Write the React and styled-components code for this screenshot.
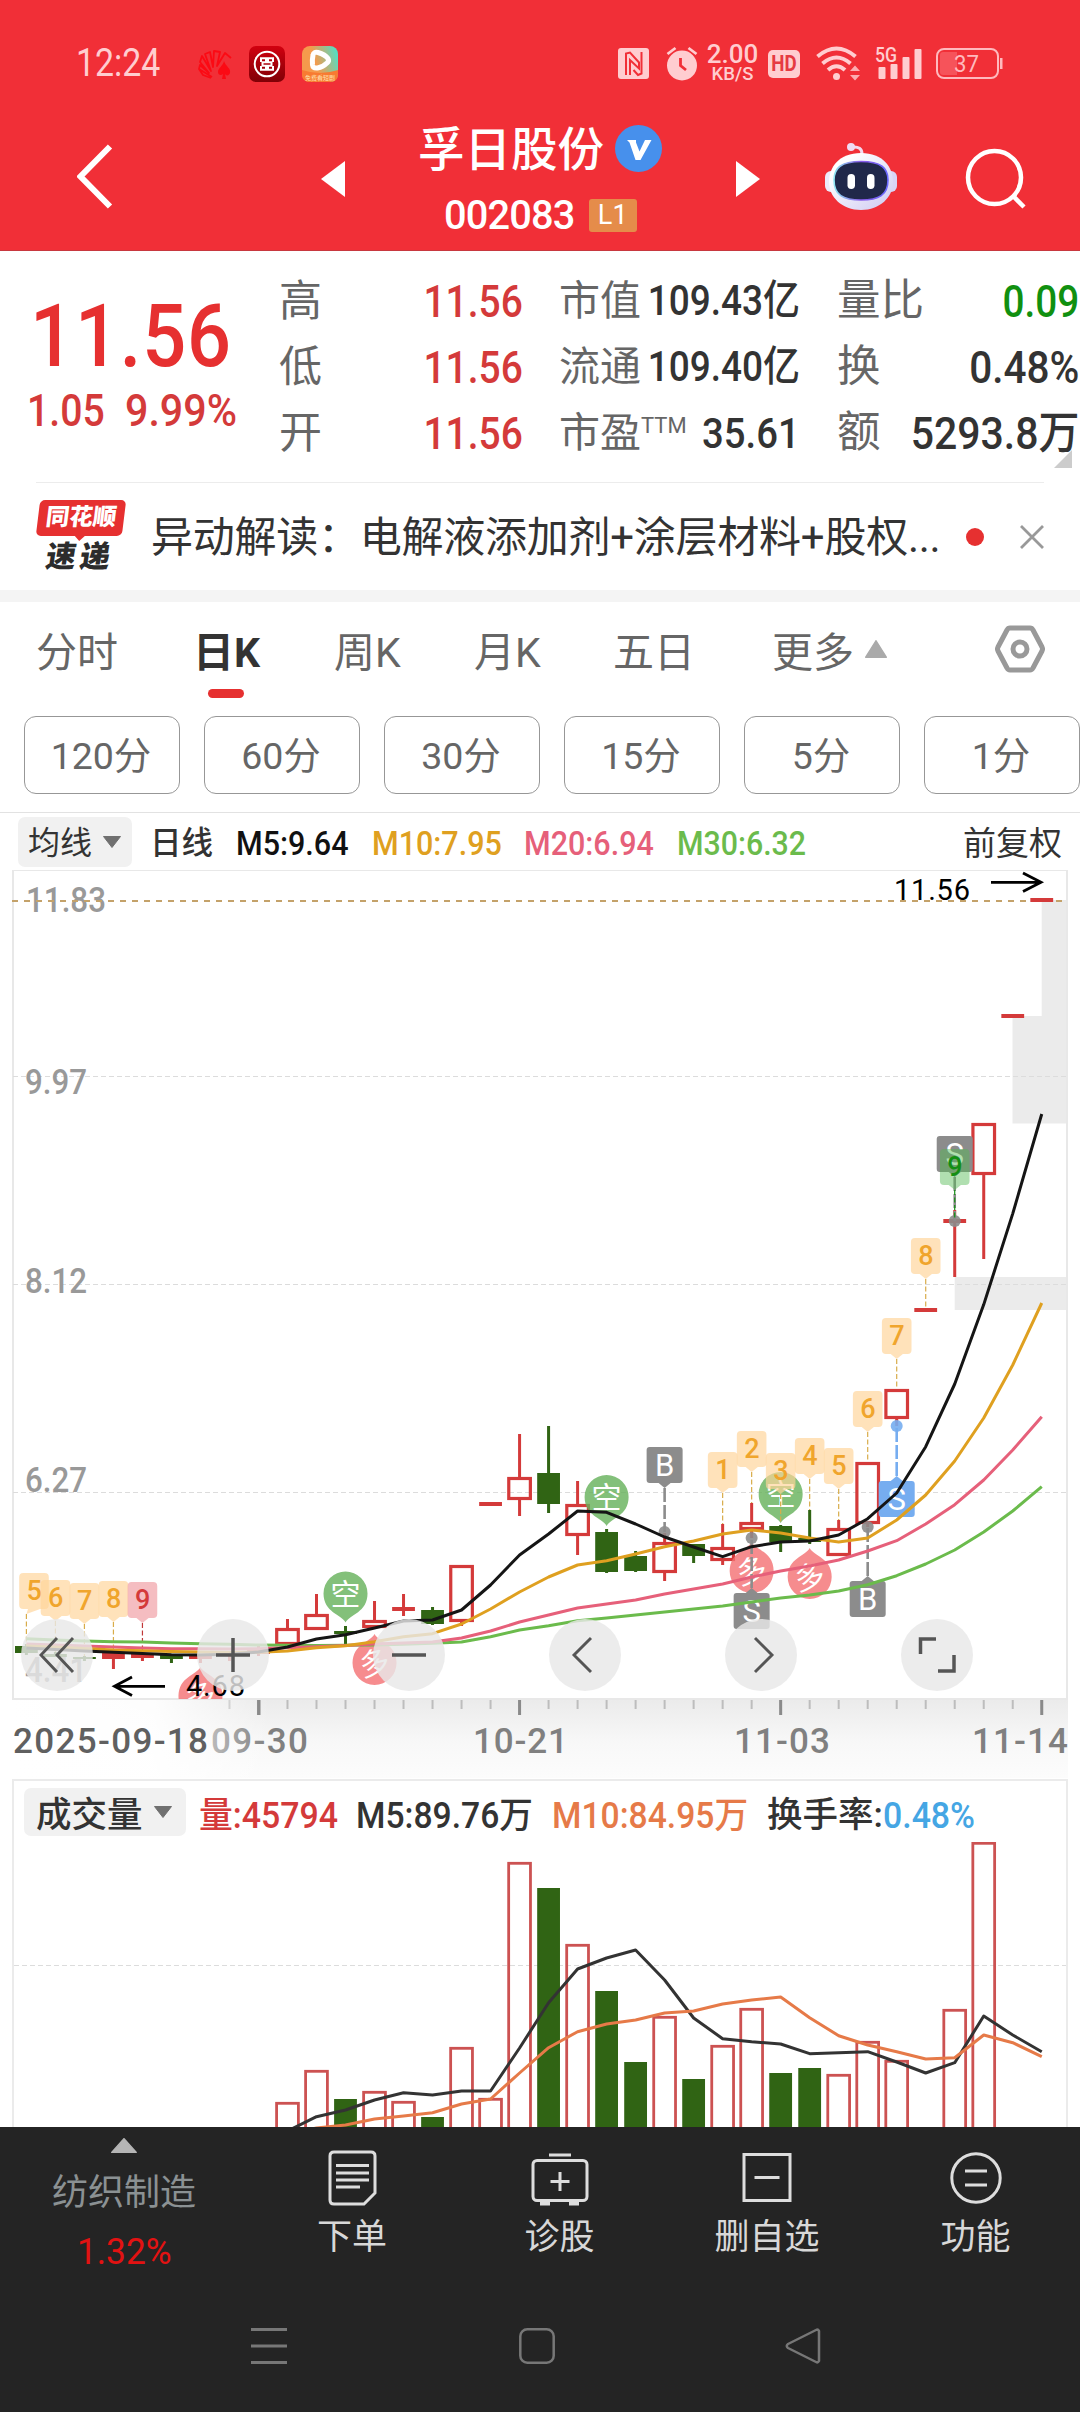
import React from "react";
import styled, { createGlobalStyle } from "styled-components";

const Global = createGlobalStyle`
  * { box-sizing: border-box; }
  body { margin: 0; background: #fff; font-family: Roboto, "Noto Sans CJK SC", sans-serif; color: #333; }
  svg { display: block; flex: none; }
`;

const RED = "#e63030";
const UP = "#d43a3a";
const DOWN = "#306414";

const Screen = styled.div`
  width: 1080px; height: 2412px; overflow: hidden; display: flex; flex-direction: column; background: #fff;
`;

const Num = styled.span`
  display: inline-block; white-space: nowrap;
  font-size: ${(p) => p.$size}px; line-height: 1; font-weight: ${(p) => p.$weight || 500};
  color: ${(p) => p.$color || "inherit"};
  letter-spacing: ${(p) => p.$ls || 0}px;
  transform: scaleX(${(p) => p.$sx || 0.92}); transform-origin: ${(p) => p.$from || "left"} center;
`;

/* ---------- header ---------- */
const Header = styled.header`
  height: 251px; background: #f12f37; border-bottom: 1px solid #c8383f; display: flex; flex-direction: column; color: #fff; flex: none;
`;
const StatusBar = styled.div`
  height: 110px; padding: 17px 77px 0 76px; display: flex; align-items: center; justify-content: space-between; color: #ffcdd0;
`;
const StatusLeft = styled.div` display: flex; align-items: center; `;
const Clock = styled.div` width: 121px; `;
const AppIcons = styled.div` display: flex; align-items: center; gap: 17px; `;
const StatusRight = styled.div` display: flex; align-items: center; `;
const Speed = styled.div`
  width: 53px; margin: 0 9px 0 8px; display: flex; flex-direction: column; align-items: center; line-height: 1; font-weight: 500;
`;
const SpeedValue = styled.span` font-size: 26px; line-height: 21px; `;
const SpeedUnit = styled.span` font-size: 18.5px; line-height: 18px; `;

const NavBar = styled.div`
  height: 140px; display: grid; grid-template-columns: 77px 244px 24px 391px 24px 65px 72px 68px 1fr; align-items: start;
`;
const NavCell = styled.div` grid-column: ${(p) => p.$col}; padding-top: ${(p) => p.$top}px; `;
const Title = styled.div`
  grid-column: 4; display: flex; flex-direction: column; align-items: center; padding-top: 12px;
`;
const NameRow = styled.div` display: flex; align-items: center; gap: 11px; height: 52px; padding-right: 1px; `;
const Name = styled.div` font-size: 46.5px; font-weight: 500; line-height: 52px; white-space: nowrap; padding-top: 3px; `;
const CodeRow = styled.div` display: flex; align-items: center; gap: 10px; height: 40px; margin-top: 21px; `;
const Level = styled.div`
  width: 48px; height: 33px; border-radius: 3px; background: #e58c4a; display: grid; place-items: center; font-size: 27px; line-height: 1; padding-top: 1px;
`;

/* ---------- quote ---------- */
const Quote = styled.section` height: 231px; display: flex; padding: 17px 0 0 0; flex: none; position: relative; `;
const PriceCol = styled.div` width: 279px; padding: 24px 0 0 27px; `;
const Price = styled.div` height: 88px; padding-left: 3px; `;
const Change = styled.div` display: flex; margin-top: 8px; `;
const ChangeCell = styled.div` width: 98px; `;
const Stats = styled.div` display: flex; flex-direction: column; flex: none; width: ${(p) => p.$w}px; margin-right: ${(p) => p.$gap || 0}px; `;
const Stat = styled.div` height: 66px; display: flex; align-items: center; white-space: nowrap; `;
const StatLabel = styled.span` flex: none; font-size: ${(p) => p.$size}px; line-height: 66px; color: #666; `;
const StatValue = styled.span` flex: 1; min-width: 0; display: flex; justify-content: flex-end; `;
const Sup = styled.sup` font-size: 22px; line-height: 1; vertical-align: 14px; `;
const Corner = styled.svg` position: absolute; left: 1054px; top: 199px; `;

const News = styled.section`
  height: 108px; margin: 0 36px; border-top: 1px solid #ececec; display: flex; align-items: center; flex: none;
`;
const Logo = styled.div` width: 115px; padding-left: 1px; display: flex; flex-direction: column; `;
const LogoTop = styled.div`
  width: 86px; height: 36px; background: ${RED}; border-radius: 5px; transform: skewX(-7deg); margin-left: 1px;
  color: #fff; font-size: 23.5px; font-weight: 900; line-height: 35px; text-align: center; position: relative; white-space: nowrap;
  &::after { content: ""; position: absolute; left: 38px; top: 35px; border: 6px solid transparent; border-top-color: ${RED}; border-bottom: 0; }
`;
const LogoBottom = styled.div`
  font-size: 30px; font-weight: 900; line-height: 34px; transform: skewX(-9deg); letter-spacing: 4px; padding-left: 9px; margin-top: 4px; color: #2c2c2c;
`;
const Headline = styled.div` flex: 1; font-size: 42px; line-height: 60px; white-space: nowrap; color: #333; letter-spacing: -0.25px; padding-top: 2px; `;
const Dot = styled.i` width: 18px; height: 18px; border-radius: 9px; background: ${RED}; margin-right: 36px; `;
const Band = styled.div` height: 12px; background: #f4f4f4; flex: none; `;

/* ---------- period tabs ---------- */
const Tabs = styled.nav`
  height: 114px; display: grid; grid-template-columns: 160px 138px 140px 139px 159px 223px 1fr; padding-left: 36px; flex: none;
`;
const Tab = styled.div`
  display: flex; align-items: center; gap: 11px; height: 94px; font-size: 41px; white-space: nowrap; text-indent: ${(p) => (p.$active ? -3 : 0)}px;
  font-weight: ${(p) => (p.$active ? 700 : 400)}; color: ${(p) => (p.$active ? "#333" : "#666")}; position: relative;
  ${(p) => p.$active && `&::after { content: ""; position: absolute; left: 12px; top: 87px; width: 36px; height: 9px; border-radius: 5px; background: ${RED}; }`}
`;
const Minutes = styled.div` height: 97px; padding-left: 24px; display: flex; gap: 24px; border-bottom: 1px solid #e2e2e2; flex: none; `;
const Minute = styled.div`
  flex: none; width: 156px; height: 78px; border: 1px solid #979797; border-radius: 12px; display: grid; place-items: center;
  font-size: 37.5px; color: #666; line-height: 1; padding: 3px 2px 0 0;
`;

/* ---------- indicator rows ---------- */
const Legend = styled.div`
  height: ${(p) => p.$h}px; display: grid; grid-template-columns: ${(p) => p.$cols}; align-items: center; padding-left: ${(p) => p.$pl}px; flex: none;
  > span { margin-top: ${(p) => p.$drop}px; }
`;
const Picker = styled.div`
  display: flex; align-items: center; width: ${(p) => p.$w}px; height: ${(p) => p.$h}px; gap: 11px; padding-left: ${(p) => p.$pl}px;
  background: #f1f1f1; border-radius: 7px; font-size: ${(p) => p.$size}px; line-height: 1; color: #333; white-space: nowrap; font-weight: ${(p) => p.$weight || 400};
`;
const PickerText = styled.span` padding-top: ${(p) => p.$drop}px; `;
const LegendText = styled.span` font-size: ${(p) => p.$size}px; line-height: 1; white-space: nowrap; font-weight: ${(p) => p.$weight || 400}; color: ${(p) => p.$color || "#333"}; `;

const ChartBox = styled.div` height: 909px; position: relative; flex: none; `;
const Controls = styled.div` position: absolute; left: 21px; top: 749px; display: flex; gap: 104px; `;
const RoundButton = styled.button`
  width: 72px; height: 72px; border: 0; padding: 0; border-radius: 50%; background: rgba(232, 232, 232, 0.82); display: grid; place-items: center;
`;
const VolumeBox = styled.section`
  height: 348px; margin: 0 12px; border: 2px solid #ebebeb; border-width: 2px 2px 0 2px; display: flex; flex-direction: column; flex: none; overflow: hidden;
`;

/* ---------- footer ---------- */
const Footer = styled.footer` flex: 1; background: #242424; display: flex; flex-direction: column; `;
const Actions = styled.div` height: 158px; display: grid; grid-template-columns: 248px 208px 207px 208px 209px; `;
const Sector = styled.div` display: flex; flex-direction: column; align-items: center; padding-top: 11px; `;
const SectorName = styled.div` font-size: 36px; line-height: 52px; margin: 14px 0 15px; color: #8b9193; `;
const Action = styled.div` display: flex; flex-direction: column; align-items: center; padding-top: 23px; color: #d8d8d8; font-size: 35px; line-height: 50px; `;
const ActionLabel = styled.div` margin-top: 7px; `;
const SystemNav = styled.div` height: 127px; display: grid; grid-template-columns: 251px 268px 266px 1fr; align-items: center; padding-bottom: 5px; `;

/* ---------- data ---------- */
const X0 = 26.4, STEP = 29.01;
const cx = (i) => X0 + STEP * i;

// [kind, body top, body bottom, wick top, wick bottom]
const candles = [
  ["g", 1646, 1653, 1644, 1655], ["g", 1654, 1657, 1652, 1657], ["g", 1657, 1659, 1656, 1661],
  ["s", 1653, 1659, 1653, 1669], ["s", 1654, 1658, 1653, 1661], ["g", 1655, 1659, 1655, 1663],
  ["s", 1655, 1659, 1655, 1663], ["s", 1653, 1656, 1651, 1661], ["s", 1648, 1654, 1646, 1656],
  ["r", 1628, 1645, 1619, 1645], ["r", 1614, 1630, 1594, 1630], ["g", 1631, 1634, 1626, 1647],
  ["r", 1620, 1628, 1601, 1628], ["s", 1607, 1611, 1594, 1616], ["g", 1610, 1624, 1607, 1625],
  ["r", 1565, 1622, 1565, 1626], ["s", 1502, 1506, 1502, 1506], ["r", 1477, 1500, 1434, 1516],
  ["g", 1473, 1504, 1426, 1513], ["r", 1504, 1536, 1481, 1555], ["g", 1532, 1572, 1529, 1573],
  ["g", 1556, 1571, 1551, 1572], ["r", 1542, 1573, 1533, 1581], ["g", 1544, 1556, 1544, 1563],
  ["r", 1547, 1561, 1524, 1565], ["r", 1522, 1530, 1503, 1538], ["g", 1526, 1542, 1525, 1552],
  ["g", 1538, 1542, 1510, 1544], ["r", 1528, 1556, 1520, 1556], ["r", 1462, 1524, 1462, 1527],
  ["r", 1389, 1419, 1389, 1426], ["s", 1308, 1312, 1308, 1312], ["s", 1219, 1223, 1210, 1277],
  ["r", 1123, 1175, 1123, 1259], ["s", 1014, 1018, 1014, 1018], ["s", 898, 902, 898, 902],
];

const ma5 = [1648, 1649.5, 1651, 1652.3, 1653.5, 1654.7, 1655, 1654.3, 1652, 1647, 1639, 1634.7, 1628, 1621, 1620, 1610, 1585, 1555, 1534, 1511, 1512.3, 1524, 1537, 1547, 1556.7, 1546.7, 1542, 1541, 1535, 1518.7, 1493, 1446.7, 1384, 1304.6, 1213.6, 1114];
const ma10 = [1646, 1647, 1648.5, 1650, 1650.7, 1651.5, 1652, 1652.5, 1652.3, 1651, 1647.7, 1645.7, 1641.7, 1636.7, 1633.7, 1624, 1609, 1592, 1577, 1565, 1560.7, 1554, 1546.7, 1541, 1534, 1530, 1533, 1538, 1542, 1538, 1520, 1495, 1461, 1418, 1365, 1303];
const ma20 = [1644, 1645, 1646, 1647, 1648, 1648.7, 1648.7, 1649, 1648.7, 1647.7, 1646.7, 1645.5, 1644, 1643, 1642, 1638, 1631, 1622, 1615, 1608, 1604, 1600, 1594, 1589, 1584, 1577, 1571, 1566, 1560, 1551, 1540.7, 1524, 1504.7, 1480, 1450, 1416.7];
const ma30 = [1638.7, 1640, 1641, 1641.7, 1642, 1643, 1643.7, 1644.3, 1645, 1645.3, 1645.5, 1645.3, 1645, 1644.3, 1643.3, 1642, 1636.7, 1630, 1625.7, 1620.7, 1618, 1615, 1612, 1609, 1606, 1602, 1598, 1595, 1591, 1584.7, 1575.7, 1564, 1550, 1532, 1511, 1486.7];

// [kind, top] from the tenth session on
const volumes = [
  ["r", 2102], ["r", 2070], ["g", 2099], ["r", 2091], ["r", 2101], ["g", 2117], ["r", 2047], ["r", 2098], ["r", 1862],
  ["g", 1888], ["r", 1944], ["g", 1991], ["g", 2062], ["r", 2016], ["g", 2079], ["r", 2045], ["r", 2008], ["g", 2073],
  ["g", 2068], ["r", 2074], ["r", 2041], ["r", 2060], null, ["r", 2009], ["r", 1842],
];
const vol5 = [2131, 2116.7, 2110, 2100, 2092.7, 2095, 2091, 2091, 2048, 2002.7, 1969, 1958, 1950, 1980, 2018, 2038.7, 2041.7, 2044, 2053.7, 2052.7, 2051.7, 2062, 2073, 2062.7, 2016, 2035, 2051.7];
const vol10 = [2134, 2128, 2125, 2119, 2116, 2112.7, 2104, 2099, 2073, 2047.7, 2031.7, 2024, 2020, 2013, 2011, 2004, 2000, 1997, 2017.7, 2035.7, 2045, 2051.7, 2059, 2057.7, 2035, 2042.7, 2056.7];

// [text, centre x, top, anchor index, dash end, tone]
const tags = [
  ["5", 34, 1573, 0, 1646, "o"], ["6", 55.5, 1580, 1, 1652, "o"], ["7", cx(2), 1583, 2, 1656, "o"], ["8", cx(3), 1581, 3, 1653, "o"], ["9", cx(4), 1582, 4, 1653, "p"],
  ["1", cx(24), 1452, 24, 1524, "o"], ["2", cx(25), 1431, 25, 1503, "o"], ["3", cx(26), 1453, 26, 1524, "o"], ["4", cx(27), 1438, 27, 1510, "o"], ["5", cx(28), 1448, 28, 1520, "o"],
  ["6", cx(29), 1391, 29, 1462, "o"], ["7", cx(30), 1318, 30, 1389, "o"], ["8", cx(31), 1238, 31, 1308, "o"], ["9", cx(32), 1149, 32, 1219, "g"],
];
const tone = {
  o: { bg: "#ffd49a", fg: "#f0a52c", dash: "#d8ac4a", opacity: 0.68 },
  p: { bg: "#ef9aa0", fg: "#d43a3a", dash: "#c03838", opacity: 0.65 },
  g: { bg: "#4fb84f", fg: "#138f13", dash: "#138f13", opacity: 0.45 },
};

const line = (ys, start = 0) => ys.map((y, k) => `${cx(start + k)},${y}`).join(" ");

function Candle({ i, d }) {
  const [k, t, b, wt, wb] = d;
  const x = cx(i);
  const c = k === "g" ? DOWN : UP;
  return (
    <g fill={c} stroke="none">
      {k === "r" ? (
        <>
          {wt < t && <rect x={x - 1.5} y={wt} width="3" height={t - wt} />}
          {wb > b && <rect x={x - 1.5} y={b} width="3" height={wb - b} />}
          <rect x={x - 10.8} y={t + 1.5} width="21.6" height={Math.max(b - t - 3, 1)} fill="none" stroke={c} strokeWidth="3.2" />
        </>
      ) : (
        <>
          <rect x={x - 1.5} y={wt} width="3" height={wb - wt} />
          <rect x={x - 11.4} y={t} width="22.8" height={b - t} />
        </>
      )}
    </g>
  );
}

function Tag({ d }) {
  const [text, x, y, i, end, k] = d;
  const c = tone[k];
  return (
    <g>
      <line x1={cx(i)} x2={cx(i)} y1={y + 41} y2={end} stroke={c.dash} strokeWidth="1.2" strokeDasharray="5 2.5" />
      <path
        fill={c.bg}
        opacity={c.opacity}
        d={`M${x - 10.8} ${y}h21.6q4 0 4 4v28q0 4-4 4h-4.6L${cx(i)} ${y + 41}L${x - 6} ${y + 36}h-4.8q-4 0-4-4v-28q0-4 4-4z`}
      />
      <text x={x + 0.3} y={y + 27} fontSize="27" fontWeight="500" textAnchor="middle" fill={c.fg}>{text}</text>
    </g>
  );
}

function Trade({ i, text, y, dot, color }) {
  const x = cx(i);
  const above = y < dot;
  const tip = above ? y + 41 : y - 5;
  return (
    <g>
      <line x1={x} x2={x} y1={tip} y2={dot} stroke={color} strokeWidth="2.6" strokeDasharray="14 3" />
      <circle cx={x} cy={dot} r="6" fill={color} opacity="0.9" />
      <g fill={color}>
        <rect x={x - 18} y={y} width="36" height="36" rx="3" />
        <path d={above ? `M${x - 6} ${y + 36}L${x} ${tip}L${x + 6} ${y + 36}z` : `M${x - 6} ${y}L${x} ${tip}L${x + 6} ${y}z`} />
      </g>
      <text x={x} y={y + 29} fontSize="31" textAnchor="middle" fill="#fff">{text}</text>
    </g>
  );
}

function Balloon({ i, y, text, up }) {
  const x = cx(i);
  const s = up ? -1 : 1;
  return (
    <g opacity="0.8">
      <path fill={up ? "#f57072" : "#65b15a"} d={`M${x} ${y + s * 29}C${x - 4} ${y + s * 21} ${x - 22} ${y + s * 19} ${x - 22} ${y}A22 22 0 0 ${up ? 0 : 1} ${x + 22} ${y}C${x + 22} ${y + s * 19} ${x + 4} ${y + s * 21} ${x} ${y + s * 29}z`} />
      <text x={x} y={y + 11} fontSize="30" textAnchor="middle" fill="#fff" transform={up ? `rotate(-14 ${x} ${y})` : undefined}>{text}</text>
    </g>
  );
}

function KChart() {
  const axis = { fontSize: 35, fill: "#999", fontWeight: 500, lengthAdjust: "spacingAndGlyphs" };
  const date = { ...axis, y: 1753, lengthAdjust: "spacing", fill: "#808080" };
  return (
    <svg width="1080" height="909" viewBox="0 870 1080 909" fontFamily='Roboto, "Noto Sans CJK SC", sans-serif'>
      <defs>
        <linearGradient id="ruler" x1="0" y1="0" x2="0" y2="1">
          <stop offset="0" stopColor="#ebebeb" /><stop offset="0.55" stopColor="#f8f8f8" /><stop offset="1" stopColor="#fcfcfc" />
        </linearGradient>
        <linearGradient id="veil" x1="0" y1="0" x2="1" y2="0">
          <stop offset="0" stopColor="#fff" /><stop offset="0.55" stopColor="#fff" stopOpacity="0.9" /><stop offset="1" stopColor="#fff" stopOpacity="0" />
        </linearGradient>
        <clipPath id="plot"><rect x="13" y="870" width="1055" height="829" /></clipPath>
      </defs>
      <g fill="#ebebeb">
        <rect x="1041.7" y="900" width="26" height="116" />
        <rect x="1012.5" y="1016" width="55" height="107.5" />
        <rect x="954.7" y="1277" width="113" height="33" />
      </g>
      <rect x="13" y="870" width="1054" height="829" fill="none" stroke="#e8e8e8" strokeWidth="2" />
      <g stroke="#dcdcdc" strokeDasharray="5 3">
        <line x1="13" x2="1067" y1="1076.5" y2="1076.5" /><line x1="13" x2="1067" y1="1284.5" y2="1284.5" /><line x1="13" x2="1067" y1="1492.5" y2="1492.5" />
      </g>
      <text {...axis} x="26" y="912" textLength="80">11.83</text>
      <text {...axis} x="25" y="1094" textLength="62">9.97</text>
      <text {...axis} x="25" y="1293" textLength="62">8.12</text>
      <text {...axis} x="25" y="1492" textLength="62">6.27</text>
      <text {...axis} x="25" y="1682" textLength="62">4.41</text>
      <line x1="12" x2="1067" y1="901" y2="901" stroke="#c4a26a" strokeWidth="2" strokeDasharray="6 6" />

      <g clipPath="url(#plot)">
        {candles.map((d, i) => <Candle key={i} i={i} d={d} />)}
        <Balloon i={11} y={1593.5} text="空" /><Balloon i={20} y={1497} text="空" /><Balloon i={26} y={1494} text="空" />
        <Balloon i={25} y={1571} text="多" up /><Balloon i={27} y={1577} text="多" up /><Balloon i={12} y={1663} text="多" up /><Balloon i={6} y={1696} text="多" up />
        <Trade i={22} text="B" y={1447} dot={1532} color="#8c8c8c" />
        <Trade i={25} text="S" y={1593} dot={1538} color="#8c8c8c" />
        <Trade i={29} text="B" y={1581} dot={1527} color="#8c8c8c" />
        <Trade i={30} text="S" y={1481} dot={1426} color="#76adf0" />
        <Trade i={32} text="S" y={1136} dot={1221} color="#8c8c8c" />
        {tags.map((d, i) => <Tag key={i} d={d} />)}
        <g fill="none" strokeWidth="3" strokeLinejoin="round">
          <polyline points={line(ma30)} stroke="#6bbb4c" />
          <polyline points={line(ma20)} stroke="#e6607a" />
          <polyline points={line(ma10)} stroke="#dfa020" />
          <polyline points={line(ma5)} stroke="#151515" />
        </g>
      </g>

      <g stroke="#000" strokeWidth="2.8" fill="none">
        <path d="M991 882.3H1041M1023 873L1041 882.3L1023 891.6" />
        <path d="M165 1686.3H115M132 1677L114.5 1686.3L132 1695.6" />
      </g>
      <text x="894" y="900" fontSize="29" fill="#000" textLength="76">11.56</text>
      <text x="186" y="1696" fontSize="29" fill="#000" textLength="59">4.68</text>

      <rect x="12" y="1700" width="1056" height="78" fill="url(#ruler)" />
      <g fill="#bdbdbd">
        {Array.from({ length: 29 }, (_, k) => k + 7).map((i) => <rect key={i} x={cx(i) - 1} y="1700" width="2" height="9" />)}
        {[8, 17, 26, 35].map((i) => <rect key={i} x={cx(i) - 1.5} y="1700" width="3" height="15" fill="#8a8a8a" />)}
      </g>
      <text {...date} x="211" textLength="97">09-30</text>
      <rect x="12" y="1700" width="258" height="78" fill="url(#veil)" />
      <rect x="257.5" y="1700" width="3" height="15" fill="#8a8a8a" />
      <text {...date} x="13" textLength="195" fill="#606060">2025-09-18</text>
      <text {...date} x="473" textLength="95">10-21</text>
      <text {...date} x="734" textLength="96">11-03</text>
      <text {...date} x="972" textLength="96">11-14</text>
    </svg>
  );
}

function VolumeChart() {
  return (
    <svg width="1054" height="286" viewBox="14 1842 1054 286">
      <line x1="14" x2="1068" y1="1965.5" y2="1965.5" stroke="#dcdcdc" strokeDasharray="5 3" />
      {volumes.map((v, k) => v && (v[0] === "g"
        ? <rect key={k} x={cx(k + 9) - 11.4} y={v[1]} width="22.8" height="300" fill={DOWN} />
        : <rect key={k} x={cx(k + 9) - 10.9} y={v[1] + 1.3} width="21.8" height="300" fill="none" stroke="#cc5252" strokeWidth="2.8" />))}
      <g fill="none" strokeWidth="3" strokeLinejoin="round">
        <polyline points={line(vol5, 9)} stroke="#333" />
        <polyline points={line(vol10, 9)} stroke="#e67a48" />
      </g>
    </svg>
  );
}

const Caret = ({ w = 18, h = 12, up, color = "#707070" }) => (
  <svg width={w} height={h} viewBox="0 0 18 12" preserveAspectRatio="none">
    <path d={up ? "M9 0.5L17.5 11.5H0.5z" : "M0.5 0.5H17.5L9 11.5z"} fill={color} stroke={color} strokeLinejoin="round" />
  </svg>
);

const CardFan = () => (
  <svg width="35" height="36" viewBox="0 0 35 36" fill="none" stroke="#fb0a14" strokeWidth="1.8" strokeLinejoin="round">
    <path d="M15 31L2 23L3 19L12 27L3 16L5 10L14 25L8 8L13 6L16 21L17 5L23 6L20 20L28 7L34 12M2 23l4 6 8 3" />
    <path d="M27 15c2 6 7 7 6 12-1 3-4 3-5 1l1 5h-4l1-5c-2 2-5 1-5-2 0-4 5-6 6-11z" fill="#fb0a14" stroke="none" />
  </svg>
);
const Bank = () => (
  <svg width="36" height="36" viewBox="0 0 36 36" fill="none">
    <defs><linearGradient id="bk" x1="0" y1="0" x2="0" y2="1"><stop offset="0" stopColor="#d2000f" /><stop offset="1" stopColor="#800006" /></linearGradient></defs>
    <rect width="36" height="36" rx="7" fill="url(#bk)" />
    <circle cx="18" cy="18" r="12.3" stroke="#fff" strokeWidth="2" />
    <path d="M11 12.3H17V16.200H13.500V19.800H17V23.700H11M25 12.300H19V16.200H22.500V19.800H19V23.700H25M12 12v4M24 12v4M12 20v4M24 20v4" stroke="#fff" strokeWidth="2" />
  </svg>
);
const Video = () => (
  <svg width="36" height="36" viewBox="0 0 36 36">
    <defs><linearGradient id="vd" x1="0" y1="0.3" x2="1" y2="0"><stop offset="0.3" stopColor="#f59a4c" /><stop offset="0.95" stopColor="#4fe0c8" /></linearGradient></defs>
    <rect width="36" height="36" rx="8" fill="url(#vd)" />
    <path d="M0 24q18 6 36 0v4q0 8-8 8H8q-8 0-8-8z" fill="#f87a32" />
    <path d="M11 9Q11.500 5.500 16 6.500Q23 8.500 26 12.500Q27.500 15 25 17Q21 21 15.500 22Q11 22.500 10.500 19Q10 14 11 9z" fill="none" stroke="#fff" strokeWidth="5" />
    <text x="18" y="33.5" fontSize="6" fill="#ffe3b0" textAnchor="middle" fontFamily='"Noto Sans CJK SC", sans-serif'>免费看短剧</text>
  </svg>
);

const StatusIcons = styled.div` display: flex; align-items: center; gap: 17px; `;
const Nfc = () => (
  <svg width="31" height="31" viewBox="0 0 31 31">
    <rect width="31" height="31" rx="3" fill="#ffcdd0" />
    <path d="M8 27V5.500L12 4.500L21 14.500V20.500L12 12V27M23.500 4V25.500L20 27L15.500 22" fill="none" stroke="#f12f37" strokeWidth="2" />
  </svg>
);
const Alarm = () => (
  <svg width="32" height="35" viewBox="0 0 32 35">
    <circle cx="16" cy="19.5" r="15" fill="#ffcdd0" />
    <path d="M1.500 8L9.500 2M30.500 8L22.500 2" stroke="#ffcdd0" strokeWidth="2.8" />
    <path d="M14.500 12V19.500L20 24" stroke="#f12f37" strokeWidth="2.8" fill="none" />
  </svg>
);
const Hd = styled.div`
  width: 32px; height: 28px; border-radius: 5px; background: #ffcdd0; color: #e63a42; display: grid; place-items: center; margin-right: 16px;
`;
const Wifi = () => (
  <svg width="45" height="35" viewBox="0 0 45 35" fill="none" stroke="#ffcdd0" strokeWidth="4">
    <path d="M1.500 10.500Q20.500-5.500 39.500 10.500M6.500 17.500Q20.500 5.500 34.500 17.500M12 24Q20.500 16.500 29 24" />
    <circle cx="20.5" cy="30.5" r="3.5" fill="#ffcdd0" stroke="none" />
    <path d="M34 25L39 19.500L44 25zM34 29L39 34.500L44 29z" fill="#ffcdd0" stroke="none" opacity="0.8" />
  </svg>
);
const Signal = () => (
  <svg width="47" height="42" viewBox="0 -4 47 42" fill="#ffcdd0">
    <text x="0" y="14.5" fontSize="21" fontWeight="500" textLength="22" lengthAdjust="spacingAndGlyphs" fontFamily="Roboto, sans-serif">5G</text>
    <rect x="3.5" y="20" width="7" height="12" rx="1" /><rect x="15.5" y="17" width="7" height="15" rx="1" /><rect x="27.5" y="10" width="7" height="22" rx="1" /><rect x="39.5" y="2" width="7" height="30" rx="1" />
  </svg>
);
const Battery = () => (
  <svg width="67" height="31" viewBox="0 0 67 31" fill="none">
    <rect x="1" y="1" width="61" height="29" rx="7" stroke="#ffb9bd" strokeWidth="2" />
    <path d="M7 4H21V27H7Q4 27 4 24V7Q4 4 7 4z" fill="#f6535a" />
    <rect x="64" y="10" width="2.5" height="11" fill="#ffb9bd" />
    <text x="30.5" y="23.500" fontSize="24" fill="#ffb9bd" textAnchor="middle" textLength="25" lengthAdjust="spacingAndGlyphs" fontFamily="Roboto, sans-serif">37</text>
  </svg>
);
const Radio = styled.div` display: flex; align-items: center; gap: 14px; `;
const Robot = () => (
  <svg width="72" height="67" viewBox="0 0 72 67">
    <defs>
      <linearGradient id="shell" x1="0" y1="0" x2="1" y2="1"><stop offset="0.2" stopColor="#fff" /><stop offset="1" stopColor="#cdc9f2" /></linearGradient>
      <linearGradient id="rim" x1="0" y1="0" x2="1" y2="0"><stop offset="0" stopColor="#8fe6f2" /><stop offset="0.5" stopColor="#8a5ae8" /><stop offset="1" stopColor="#6a6aff" /></linearGradient>
    </defs>
    <path d="M27 4Q37 3 37 11" fill="none" stroke="#f3d9ee" strokeWidth="3" /><circle cx="26" cy="4" r="4" fill="#efdcf4" />
    <rect x="0" y="28" width="12" height="21" rx="6" fill="#eceafa" /><rect x="60" y="28" width="12" height="21" rx="6" fill="#d9d4f6" />
    <path d="M36 10C58 10 68 24 68 39S55 67 36 67S4 54 4 39S14 10 36 10z" fill="url(#shell)" />
    <path d="M36 18.500C56 18.500 63 25 63 37C63 52 54 57 36 57S9 52 9 37C9 25 16 18.500 36 18.500z" fill="#20284a" stroke="url(#rim)" strokeWidth="1.6" />
    <rect x="22.5" y="31" width="7.5" height="15" rx="3.7" fill="#fff" /><rect x="42" y="31" width="7.5" height="15" rx="3.7" fill="#fff" />
  </svg>
);

const iconProps = { width: 40, height: 40, viewBox: "0 0 40 40", fill: "none", stroke: "#555", strokeWidth: 2.9 };

const statColumns = [
  { w: 244, gap: 36, label: 43, rows: [["高", "11.56", 45, 0.865, UP], ["低", "11.56", 45, 0.865, UP], ["开", "11.56", 45, 0.865, UP]] },
  { w: 241, gap: 37, label: 41, rows: [["市值", "109.43亿", 42, 0.88], ["流通", "109.40亿", 42, 0.88], ["市盈", "35.61", 43, 0.89, null, "TTM"]] },
  { w: 242, gap: 0, label: 43.5, rows: [["量比", "0.09", 45, 0.86, "#109010"], ["换", "0.48%", 45, 0.9], ["额", "5293.8万", 45, 0.91]] },
];

export default function App() {
  return (
    <Screen>
      <Global />
      <Header>
        <StatusBar>
          <StatusLeft>
            <Clock><Num $size={38.5} $weight={400} $sx={0.88}>12:24</Num></Clock>
            <AppIcons><CardFan /><Bank /><Video /></AppIcons>
          </StatusLeft>
          <StatusRight>
            <StatusIcons><Nfc /><Alarm /></StatusIcons>
            <Speed><SpeedValue>2.00</SpeedValue><SpeedUnit>KB/S</SpeedUnit></Speed>
            <Hd><Num $size={22} $weight={700} $sx={0.85} $from="center">HD</Num></Hd>
            <Radio><Wifi /><Signal /><Battery /></Radio>
          </StatusRight>
        </StatusBar>
        <NavBar>
          <NavCell $col={2} $top={34}>
            <svg width="38" height="66" viewBox="0 0 38 66" fill="none" stroke="#fff" strokeWidth="6"><path d="M33 2.500L3.500 32.500L33 62.500" /></svg>
          </NavCell>
          <NavCell $col={3} $top={51}><svg width="24" height="36" viewBox="0 0 24 36"><path d="M24 0V36L0 18z" fill="#fff" /></svg></NavCell>
          <Title>
            <NameRow>
              <Name>孚日股份</Name>
              <svg width="47" height="47" viewBox="0 0 47 47"><circle cx="23.5" cy="23.5" r="23.5" fill="#4790ec" /><path d="M12 15H21V17.500L24.500 26.500L30 15H36.500L25.500 35H20.500L14.500 17.500z" fill="#fff" /></svg>
            </NameRow>
            <CodeRow><Num $size={41} $sx={0.97} $ls={-0.9}>002083</Num><Level>L1</Level></CodeRow>
          </Title>
          <NavCell $col={5} $top={51}><svg width="24" height="36" viewBox="0 0 24 36"><path d="M0 0V36L24 18z" fill="#fff" /></svg></NavCell>
          <NavCell $col={7} $top={33}><Robot /></NavCell>
          <NavCell $col={9} $top={38}>
            <svg width="62" height="62" viewBox="0 0 62 62" fill="none" stroke="#fff" strokeWidth="4.5"><circle cx="29.5" cy="29.5" r="26.5" /><path d="M48 48L59 59" /></svg>
          </NavCell>
        </NavBar>
      </Header>

      <Quote>
        <PriceCol>
          <Price><Num $size={88} $color={RED} $sx={0.88} $ls={1}>11.56</Num></Price>
          <Change>
            <ChangeCell><Num $size={45} $color={UP} $sx={0.87}>1.05</Num></ChangeCell>
            <Num $size={45} $color={UP} $sx={0.915}>9.99%</Num>
          </Change>
        </PriceCol>
        {statColumns.map((c) => (
          <Stats key={c.w} $w={c.w} $gap={c.gap}>
            {c.rows.map(([label, value, size, sx, color, sup]) => (
              <Stat key={label}>
                <StatLabel $size={c.label}>{label}{sup && <Sup>{sup}</Sup>}</StatLabel>
                <StatValue><Num $size={size} $sx={sx} $color={color} $from="right">{value}</Num></StatValue>
              </Stat>
            ))}
          </Stats>
        ))}
        <Corner width="18" height="18"><path d="M18 0V18H0z" fill="#ccc" /></Corner>
      </Quote>

      <News>
        <Logo><LogoTop>同花顺</LogoTop><LogoBottom>速递</LogoBottom></Logo>
        <Headline>异动解读：电解液添加剂+涂层材料+股权...</Headline>
        <Dot />
        <svg width="24" height="24" viewBox="0 0 24 24" stroke="#999" strokeWidth="2.8"><path d="M1 1L23 23M23 1L1 23" /></svg>
      </News>
      <Band />

      <Tabs>
        <Tab>分时</Tab><Tab $active>日K</Tab><Tab>周K</Tab><Tab>月K</Tab><Tab>五日</Tab>
        <Tab>更多<Caret up w={22} h={18} color="#aaa" /></Tab>
        <Tab>
          <svg width="50" height="48" viewBox="0 0 50 48" fill="none" stroke="#999" strokeWidth="5" strokeLinejoin="round"><path d="M15 3H35Q37 3 38 5L47 22Q48 24 47 26L38 43Q37 45 35 45H15Q13 45 12 43L3 26Q2 24 3 22L12 5Q13 3 15 3z" /><circle cx="25" cy="24" r="7" /></svg>
        </Tab>
      </Tabs>
      <Minutes>
        {["120分", "60分", "30分", "15分", "5分", "1分"].map((m) => <Minute key={m}>{m}</Minute>)}
      </Minutes>

      <Legend $h={57} $pl={18} $drop={4} $cols="132px 86px 136px 152px 153px 286px 1fr">
        <Picker $w={114} $h={50} $pl={10} $size={32}><PickerText $drop={2}>均线</PickerText><Caret /></Picker>
        <LegendText $size={31.5} $weight={500}>日线</LegendText>
        <Num $size={33.5} $color="#111" $sx={0.91}>M5:9.64</Num>
        <Num $size={33.5} $color="#dfa020" $sx={0.91}>M10:7.95</Num>
        <Num $size={33.5} $color="#e6607a" $sx={0.91}>M20:6.94</Num>
        <Num $size={33.5} $color="#6bbb4c" $sx={0.905}>M30:6.32</Num>
        <LegendText $size={33}>前复权</LegendText>
      </Legend>

      <ChartBox>
        <KChart />
        <Controls>
          <RoundButton><svg {...iconProps}><path d="M20 3L4 20L20 37M36 3L20 20L36 37" /></svg></RoundButton>
          <RoundButton><svg {...iconProps} strokeWidth="3.5"><path d="M20 3V37M3 20H37" /></svg></RoundButton>
          <RoundButton><svg {...iconProps} strokeWidth="3.5"><path d="M3 20H37" /></svg></RoundButton>
          <RoundButton><svg {...iconProps}><path d="M26 3L9 20L26 37" /></svg></RoundButton>
          <RoundButton><svg {...iconProps}><path d="M14 3L31 20L14 37" /></svg></RoundButton>
          <RoundButton><svg {...iconProps} strokeWidth="3.5"><path d="M3.500 19V4H19M21 36H37V20" /></svg></RoundButton>
        </Controls>
      </ChartBox>

      <VolumeBox>
        <Legend $h={61} $pl={10} $drop={8} $cols="175px 157px 196px 215px 116px 1fr">
          <Picker $w={162} $h={48} $pl={12} $size={35.5} $weight={500}><PickerText $drop={8}>成交量</PickerText><Caret /></Picker>
          <Num $size={36} $color={UP} $sx={0.94}>量:45794</Num>
          <Num $size={36} $sx={0.935}>M5:89.76万</Num>
          <Num $size={36} $sx={0.935} $color="#e67a48">M10:84.95万</Num>
          <LegendText $size={35.5} $weight={500}>换手率:</LegendText>
          <Num $size={36} $sx={0.94} $color="#45a6e4">0.48%</Num>
        </Legend>
        <VolumeChart />
      </VolumeBox>

      <Footer>
        <Actions>
          <Sector>
            <Caret up w={26} h={15} color="#b5b5b5" />
            <SectorName>纺织制造</SectorName>
            <Num $size={36} $weight={400} $sx={0.98} $from="center" $color="#e21212">1.32%</Num>
          </Sector>
          <Action>
            <svg width="49" height="56" viewBox="0 0 49 56" fill="none" stroke="#ddd" strokeWidth="3"><path d="M6 2H43Q47 2 47 6V43L36 54H6Q2 54 2 50V6Q2 2 6 2z" /><path d="M8 15.500H41M8 23H41M8 30H41M8 37H32" /></svg>
            <ActionLabel>下单</ActionLabel>
          </Action>
          <Action>
            <svg width="58" height="56" viewBox="0 0 58 56" fill="none" stroke="#ddd" strokeWidth="3"><rect x="2" y="10.5" width="54" height="40" rx="4" /><path d="M18 5H40M29 22V41M19.500 31.500H38.500" /><path d="M9 53.500H19M38 53.500H48" strokeWidth="4" /></svg>
            <ActionLabel>诊股</ActionLabel>
          </Action>
          <Action>
            <svg width="50" height="56" viewBox="0 0 50 56" fill="none" stroke="#ddd" strokeWidth="3"><rect x="2" y="4.5" width="46" height="46" /><path d="M12.500 27.500H37.500" /></svg>
            <ActionLabel>删自选</ActionLabel>
          </Action>
          <Action>
            <svg width="52" height="56" viewBox="0 0 52 56" fill="none" stroke="#ddd" strokeWidth="3"><circle cx="26" cy="28" r="24.2" /><path d="M15 21H37M15 35H37" /></svg>
            <ActionLabel>功能</ActionLabel>
          </Action>
        </Actions>
        <SystemNav>
          <span />
          <svg width="36" height="36" viewBox="0 0 36 36" stroke="#777" strokeWidth="3"><path d="M0 1.500H36M0 18H36M0 34.500H36" /></svg>
          <svg width="36" height="36" viewBox="0 0 36 36" fill="none" stroke="#777" strokeWidth="2.5"><rect x="1.3" y="1.3" width="33.4" height="33.4" rx="7" /></svg>
          <svg width="36" height="36" viewBox="0 0 36 36" fill="none" stroke="#777" strokeWidth="2.5" strokeLinejoin="round"><path d="M34 3V33Q33 35 31 34L3 20Q0.500 18 3 16L31 2Q33 1 34 3z" /></svg>
        </SystemNav>
      </Footer>
    </Screen>
  );
}
